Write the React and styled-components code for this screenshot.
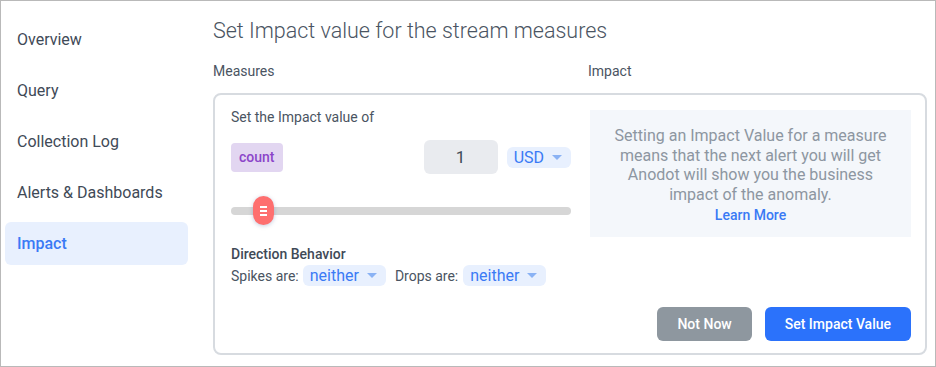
import styled, { createGlobalStyle } from 'styled-components';

const GlobalStyle = createGlobalStyle`
  html, body { margin: 0; padding: 0; background: #fff; }
  body { font-family: Roboto, "Noto Sans", Arial, sans-serif; }
  * { box-sizing: border-box; }
`;

const Frame = styled.div`
  width: 936px;
  height: 367px;
  border: 1px solid #b9b9b9;
  display: flex;
  background: #fff;
`;

const Sidebar = styled.nav`
  width: 192px;
  padding: 17px 0 0 4px;
  display: flex;
  flex-direction: column;
  gap: 8px;
`;

const NavItem = styled.div`
  width: 183px;
  height: 43px;
  display: flex;
  align-items: center;
  padding-left: 12px;
  border-radius: 6px;
  font-size: 16px;
  color: ${p => (p.$active ? '#3a7af5' : '#3f4a57')};
  font-weight: ${p => (p.$active ? 500 : 400)};
  background: ${p => (p.$active ? '#e8f0fe' : 'transparent')};
`;

const Main = styled.main`
  flex: 1;
  padding: 16px 8px 0 20px;
  display: flex;
  flex-direction: column;
`;

const Title = styled.h1`
  margin: 0;
  font-size: 21.5px;
  font-weight: 300;
  color: #4a5462;
  line-height: 28px;
`;

const Labels = styled.div`
  display: flex;
  margin-top: 15px;
  height: 22px;
  line-height: 22px;
  font-size: 14px;
  color: #4a5462;
`;

const Label = styled.div`
  width: ${p => p.$w || 'auto'};
`;

const Card = styled.section`
  margin-top: 11px;
  width: 714px;
  height: 262px;
  border: 2px solid #d7dbe0;
  border-radius: 8px;
  display: grid;
  grid-template-columns: 340px 1fr;
  grid-template-rows: 1fr auto;
  padding: 0 14px 12px 16px;
`;

const Left = styled.div`
  padding-top: 13px;
  display: flex;
  flex-direction: column;
`;

const Hint = styled.div`
  font-size: 14px;
  color: #4a5462;
  line-height: 18px;
`;

const ValueRow = styled.div`
  margin-top: 14px;
  display: flex;
  align-items: center;
  height: 34px;
`;

const Chip = styled.div`
  height: 29px;
  padding: 0 8px;
  border-radius: 4px;
  background: #e2d6f1;
  color: #8b45c9;
  font-weight: 500;
  font-size: 14px;
  display: flex;
  align-items: center;
`;

const NumberBox = styled.div`
  margin-left: auto;
  width: 74px;
  height: 34px;
  border-radius: 6px;
  background: #e9ebef;
  color: #3f4a57;
  font-size: 17px;
  display: flex;
  align-items: center;
  justify-content: center;
`;

const Select = styled.div`
  margin-left: ${p => p.$ml || '0'};
  height: 21px;
  padding: 0 9px 0 7px;
  border-radius: 6px;
  background: #e8f0fe;
  color: #3a7af5;
  font-size: 16px;
  display: inline-flex;
  align-items: center;
  gap: 8px;
`;

const Caret = styled.span`
  width: 0;
  height: 0;
  border-left: 5px solid transparent;
  border-right: 5px solid transparent;
  border-top: 5px solid #8ab2f4;
`;

const SliderWrap = styled.div`
  margin-top: 22px;
  height: 30px;
  position: relative;
  display: flex;
  align-items: center;
`;

const Track = styled.div`
  width: 100%;
  height: 8px;
  border-radius: 4px;
  background: #d6d6d6;
`;

const Thumb = styled.div`
  position: absolute;
  left: 22px;
  top: 0;
  width: 21px;
  height: 29px;
  border-radius: 11px;
  background: #fe6f6f;
  box-shadow: 0 1px 4px rgba(90, 110, 160, 0.35);
  display: flex;
  flex-direction: column;
  align-items: center;
  justify-content: center;
  gap: 2px;
  span {
    width: 7px;
    height: 2px;
    background: #fff;
  }
`;

const SubTitle = styled.div`
  margin-top: 19px;
  font-size: 14px;
  font-weight: 500;
  color: #3f4a57;
  line-height: 18px;
`;

const DirRow = styled.div`
  margin-top: 2px;
  display: flex;
  align-items: center;
  font-size: 14px;
  color: #4a5462;
`;

const Gap = styled.span`
  width: ${p => p.$w};
`;

const Info = styled.aside`
  margin-top: 15px;
  margin-left: 19px;
  height: 127px;
  background: #f4f7fb;
  display: flex;
  flex-direction: column;
  align-items: center;
  padding-top: 16px;
  text-align: center;
  font-size: 16px;
  line-height: 19.5px;
  color: #8d96a1;
`;

const Link = styled.a`
  margin-top: 2px;
  line-height: 18px;
  color: #3a7af5;
  font-size: 14px;
  font-weight: 500;
  text-decoration: none;
`;

const Actions = styled.div`
  grid-column: 1 / 3;
  display: flex;
  justify-content: flex-end;
  gap: 13px;
`;

const Button = styled.button`
  height: 34px;
  padding: 0 20px;
  border: none;
  border-radius: 6px;
  background: ${p => (p.$primary ? '#2b72fb' : '#8e979f')};
  color: #fff;
  font-family: inherit;
  font-size: 14px;
  font-weight: 500;
`;

export default function App() {
  const nav = ['Overview', 'Query', 'Collection Log', 'Alerts & Dashboards', 'Impact'];
  return (
    <>
      <GlobalStyle />
      <Frame>
        <Sidebar>
          {nav.map(n => (
            <NavItem key={n} $active={n === 'Impact'}>{n}</NavItem>
          ))}
        </Sidebar>
        <Main>
          <Title>Set Impact value for the stream measures</Title>
          <Labels>
            <Label $w="375px">Measures</Label>
            <Label>Impact</Label>
          </Labels>
          <Card>
            <Left>
              <Hint>Set the Impact value of</Hint>
              <ValueRow>
                <Chip>count</Chip>
                <NumberBox>1</NumberBox>
                <Select $ml="9px">USD<Caret /></Select>
              </ValueRow>
              <SliderWrap>
                <Track />
                <Thumb><span /><span /><span /></Thumb>
              </SliderWrap>
              <SubTitle>Direction Behavior</SubTitle>
              <DirRow>
                Spikes are:<Gap $w="4px" />
                <Select>neither<Caret /></Select>
                <Gap $w="9px" />
                Drops are:<Gap $w="5px" />
                <Select>neither<Caret /></Select>
              </DirRow>
            </Left>
            <Info>
              <div>
                Setting an Impact Value for a measure<br />
                means that the next alert you will get<br />
                Anodot will show you the business<br />
                impact of the anomaly.
              </div>
              <Link href="#">Learn More</Link>
            </Info>
            <Actions>
              <Button>Not Now</Button>
              <Button $primary>Set Impact Value</Button>
            </Actions>
          </Card>
        </Main>
      </Frame>
    </>
  );
}
